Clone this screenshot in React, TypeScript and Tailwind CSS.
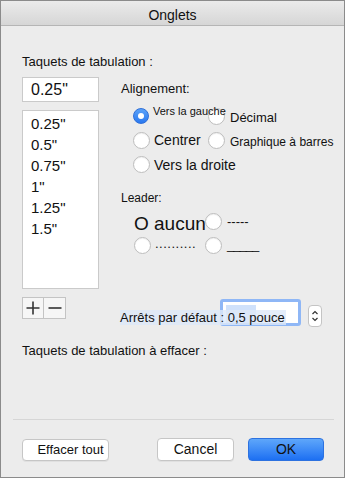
import React, { useState } from "react";

function Radio({ checked = false }: { checked?: boolean }) {
  return checked ? (
    <span className="w-[16px] h-[16px] rounded-full bg-gradient-to-b from-[#5aa2f8] to-[#2a78f0] border border-[#2f6fd8] flex items-center justify-center shrink-0">
      <span className="w-[6px] h-[6px] rounded-full bg-white" />
    </span>
  ) : (
    <span className="w-[17px] h-[17px] rounded-full bg-white border border-[#bdbdbd] shadow-[inset_0_1px_1px_rgba(0,0,0,0.06)] shrink-0" />
  );
}

export default function App() {
  const [stops] = useState(['0.25"', '0.5"', '0.75"', '1"', '1.25"', '1.5"']);

  return (
    <div
      className="w-[345px] h-[478px] border border-[#8b8b8b] bg-[#ececec] flex flex-col text-[#111] overflow-hidden"
      style={{ fontFamily: '"Liberation Sans", Arial, sans-serif' }}
    >
      {/* title bar */}
      <div className="h-[25px] shrink-0 bg-gradient-to-b from-[#ebebeb] to-[#d6d6d6] border-b border-[#b5b5b5] flex items-center justify-center text-[14px] pt-[4px]">
        Onglets
      </div>

      <div className="flex-1 flex flex-col pl-[21px]">
        <div className="mt-[28px] text-[13px] leading-[16px]">Taquets de tabulation :</div>

        <div className="mt-[7px] flex">
          {/* left column */}
          <div className="w-[77px] flex flex-col">
            <div className="h-[25px] bg-white border border-[#cacaca] text-[16px] leading-[23px] pl-[8px]">0.25"</div>
            <div className="mt-[8px] h-[179px] bg-white border border-[#cacaca] pt-[2px] pl-[8px]">
              {stops.map((s) => (
                <div key={s} className="text-[15px] leading-[21px]">{s}</div>
              ))}
            </div>
            <div className="mt-[8px] flex">
              <button className="w-[22px] h-[22px] bg-[#f6f6f6] border border-[#c4c4c4] flex items-center justify-center">
                <svg width="14" height="14" viewBox="0 0 14 14"><path d="M7 0.5v13M0.5 7h13" stroke="#333" strokeWidth="1.6" /></svg>
              </button>
              <button className="w-[22px] h-[22px] bg-[#f6f6f6] border border-l-0 border-[#c4c4c4] flex items-center justify-center">
                <svg width="14" height="14" viewBox="0 0 14 14"><path d="M0.5 7h13" stroke="#333" strokeWidth="1.6" /></svg>
              </button>
            </div>
          </div>

          {/* right column */}
          <div className="ml-[22px] flex flex-col">
            <div className="mt-[4px] text-[13px] leading-[16px]">Alignement:</div>

            <div className="mt-[6px] ml-[12px] flex flex-col">
              <div className="h-[25px] flex items-center">
                <div className="w-[75px] flex items-center">
                  <Radio checked />
                  <span className="relative z-10 ml-[4px] text-[11px] leading-[12px] -mt-[10px] whitespace-nowrap">Vers la gauche</span>
                </div>
                <div className="flex items-center mt-[2px]">
                  <Radio />
                  <span className="ml-[5px] text-[13px] mt-[2px]">Décimal</span>
                </div>
              </div>
              <div className="h-[24px] flex items-center">
                <div className="w-[75px] flex items-center">
                  <Radio />
                  <span className="ml-[4px] text-[14px]">Centrer</span>
                </div>
                <div className="flex items-center">
                  <Radio />
                  <span className="ml-[5px] text-[12px] mt-[4px] whitespace-nowrap">Graphique à barres</span>
                </div>
              </div>
              <div className="h-[24px] flex items-center">
                <Radio />
                <span className="ml-[4px] text-[14px] mt-[3px]">Vers la droite</span>
              </div>
            </div>

            <div className="mt-[14px] text-[12px] leading-[16px]">Leader:</div>

            <div className="mt-[3px] ml-[13px] flex flex-col">
              <div className="h-[24px] flex items-center">
                <div className="w-[71px] text-[19px] leading-[20px] mt-[6px] whitespace-nowrap">O aucun</div>
                <Radio />
                <span className="ml-[5px] text-[13px] mt-[2px]">-----</span>
              </div>
              <div className="h-[24px] flex items-center">
                <div className="w-[71px] flex items-center">
                  <Radio />
                  <span className="ml-[4px] text-[13px] -mt-[2px] tracking-[0.5px]">..........</span>
                </div>
                <Radio />
                <span className="ml-[5px] text-[13px] tracking-[-1px]">_____</span>
              </div>
            </div>

            <div className="relative mt-[42px] flex items-start">
              <div className="ml-[99px] w-[81px] h-[27px] rounded-[3px] border-[3px] border-[#8fb7f6] bg-white pt-[3px] pl-[3px]">
                <div className="w-[30px] h-[18px] bg-[#cfe1fb]" />
              </div>
              <div className="ml-[7px] mt-[6px] w-[14px] h-[22px] rounded-[4px] bg-white border border-[#c4c4c4] flex items-center justify-center">
                <svg width="8" height="16" viewBox="0 0 8 16">
                  <path d="M1.5 6L4 3.5L6.5 6M1.5 10L4 12.5L6.5 10" stroke="#333" strokeWidth="1.2" fill="none" />
                </svg>
              </div>
              <span className="absolute left-[-1px] top-[11px] bg-[#dde9f9]/80 text-[13px] leading-[15px] pr-[1px] whitespace-nowrap">
                Arrêts par défaut : 0,5 pouce
              </span>
            </div>
          </div>
        </div>

        <div className="mt-[16px] text-[13px] leading-[16px]">Taquets de tabulation à effacer :</div>

        <div className="mt-[60px] -ml-[9px] mr-[10px] h-px bg-[#d6d6d6]" />

        <div className="mt-[18px] flex items-center text-[13px]">
          <button className="w-[87px] h-[22px] rounded-[4px] bg-white border border-[#c6c6c6] shadow-[0_1px_0_rgba(0,0,0,0.05)] pl-[10px]">Effacer tout</button>
          <button className="ml-[48px] w-[77px] h-[23px] rounded-[4px] bg-white border border-[#c6c6c6] shadow-[0_1px_0_rgba(0,0,0,0.05)] text-[14px]">Cancel</button>
          <button className="ml-[14px] w-[76px] h-[23px] rounded-[4px] bg-gradient-to-b from-[#5ea6fa] to-[#1c6ff2] border border-[#2d72e0] text-[14px] text-[#111]">OK</button>
        </div>
      </div>
    </div>
  );
}
